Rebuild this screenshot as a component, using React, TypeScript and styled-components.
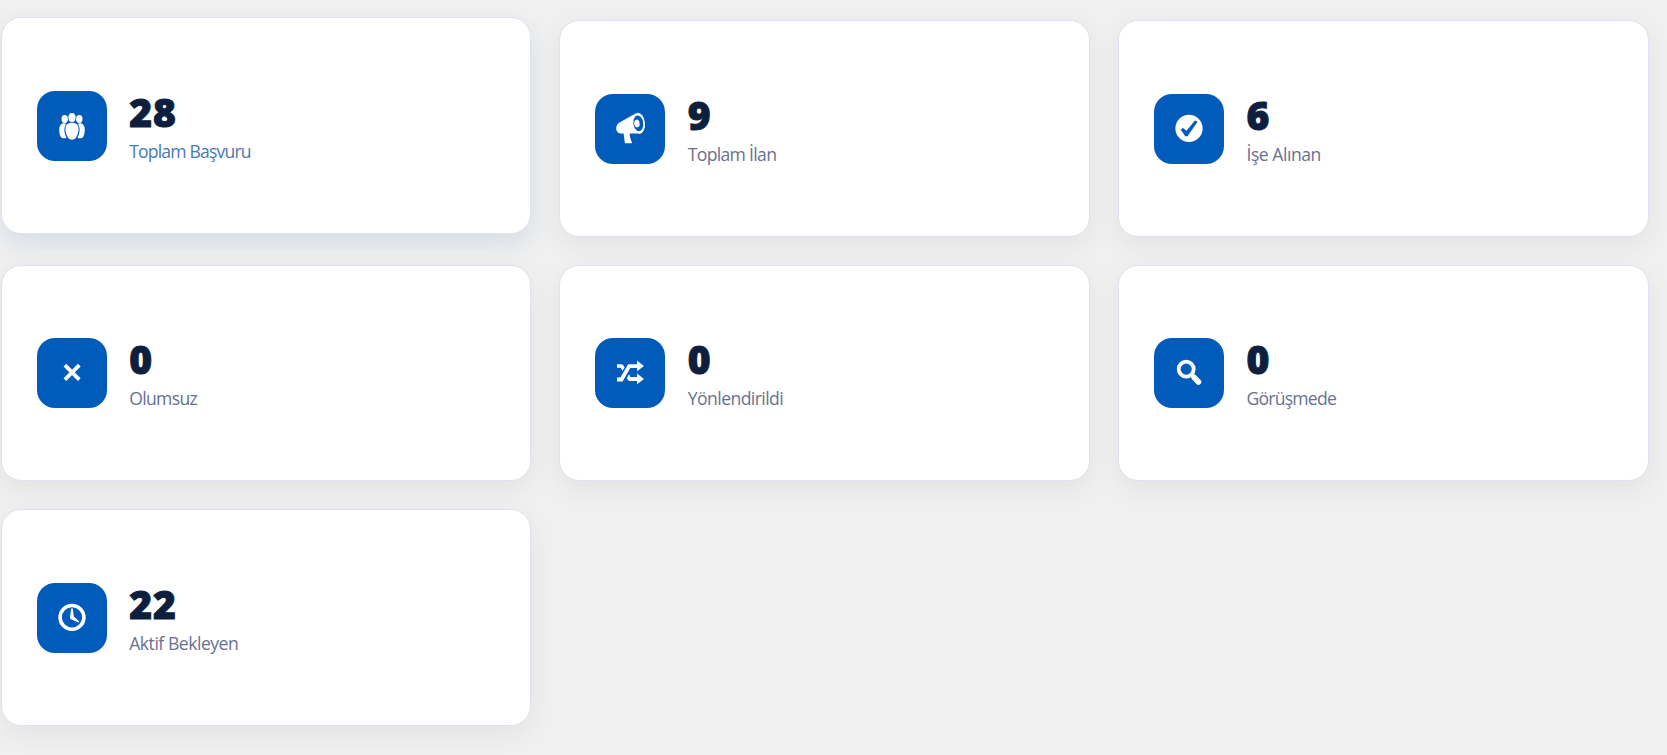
import React from 'react';
import styled, { createGlobalStyle } from 'styled-components';

const GlobalStyle = createGlobalStyle`
    * {
        box-sizing : border-box;
    }

    body {
        margin : 0;
        background-color : #f0f0f0;
        font-family : "Open Sans", "Noto Sans", sans-serif;
        overflow : hidden;
    }
`;

const Wrapper = styled.div`
    height : 755px;
    padding : 20.3px 18.3px 0 0.8px;
`;

const CardGrid = styled.div`
    display : grid;
    grid-template-columns : repeat(3, 1fr);
    grid-auto-rows : 216.5px;
    grid-gap : 28px;
`;

const Card = styled.div<{ $active?: boolean }>`
    display : flex;
    align-items : center;
    gap : 22.4px;
    padding : 0 35px;
    background-color : white;
    border : 1px solid #dde3ee;
    border-radius : 20px;
    box-shadow : ${({ $active }) => $active
        ? '0 12px 28px rgba(0, 91, 187, 0.08), 0 8px 24px rgba(0, 0, 0, 0.03)'
        : '0 8px 28px rgba(0, 0, 0, 0.06)'};
    transform : ${({ $active }) => $active ? 'translateY(-3px)' : 'none'};
`;

const IconBox = styled.div`
    flex-shrink : 0;
    width : 70px;
    height : 70px;
    border-radius : 18px;
    background-color : #005bbb;
    color : white;

    svg {
        display : block;
    }
`;

const Info = styled.div`
    display : flex;
    flex-direction : column;
    padding-top : 2px;
`;

const Count = styled.div`
    font-family : "Noto Sans", "Open Sans", sans-serif;
    font-size : 39px;
    font-weight : 900;
    line-height : 45px;
    letter-spacing : 0.9px;
    color : #0d1f3c;
    -webkit-text-stroke : 1px #0d1f3c;
`;

const Label = styled.div<{ $active?: boolean; $tracking: number }>`
    margin-top : 3px;
    font-size : 17.6px;
    line-height : 28px;
    white-space : nowrap;
    letter-spacing : ${({ $tracking }) => $tracking}px;
    color : ${({ $active }) => $active ? '#4b78b0' : '#69718f'};
`;

const Icon = ({ children }: { children: React.ReactNode }) => (
    <svg width="70" height="70" viewBox="0 0 70 70" fill="currentColor">
        {children}
    </svg>
);

const PeopleIcon = () => (
    <Icon>
        <ellipse cx="27.7" cy="28" rx="3.2" ry="3.9" />
        <ellipse cx="42.3" cy="28" rx="3.2" ry="3.9" />
        <path d="M26 32.300c-2.400.8-3.800 3-3.800 6.200 0 3.300.9 7.800 2.800 8.500 1.500.4 3.300.3 4.500-.3-1.500-3-2.300-6-2.100-9 .2-2 .8-3.600 1.900-4.900-1-.6-2.400-.8-3.300-.5z" />
        <path d="M44 32.300c2.400.8 3.800 3 3.800 6.200 0 3.300-.9 7.800-2.800 8.500-1.500.4-3.300.3-4.500-.3 1.500-3 2.300-6 2.100-9-.2-2-.8-3.600-1.900-4.900 1-.6 2.400-.8 3.300-.5z" />
        <ellipse cx="35" cy="26.600" rx="3.600" ry="4.500" />
        <path d="M35 31.800c-4.200 0-6.600 2.300-6.600 6 0 3 1 6 2.400 8.500.8 1.500 2.400 2.400 4.200 2.400s3.400-.9 4.200-2.400c1.400-2.500 2.400-5.500 2.400-8.500 0-3.700-2.400-6-6.600-6z" />
    </Icon>
);

const MegaphoneIcon = () => (
    <Icon>
        <path d="M41 19.200 24.500 28.400c-4.800 2.800-4.200 10.600.8 11.100H46z" />
        <path d="M28.500 38.500h6.300c-.6 3.500.9 6.500 2.300 10.800h-7.200z" />
        <ellipse cx="43.600" cy="29.200" rx="6.400" ry="10.400" transform="rotate(-7 43.600 29.200)" />
        <ellipse cx="43.300" cy="29.300" rx="4.900" ry="7.900" fill="#005bbb" transform="rotate(-7 43.300 29.300)" />
        <ellipse cx="41.900" cy="29.500" rx="2.700" ry="3.900" transform="rotate(-7 41.900 29.500)" />
    </Icon>
);

const CheckIcon = () => (
    <Icon>
        <circle cx="35" cy="34.400" r="13.600" />
        <path d="m26.600 35.600 2.400-1.700 3.500 2.900 8.400-10.200 2.700 1.200-10.100 14.500h-2.200z" fill="#005bbb" />
    </Icon>
);

const CrossIcon = () => (
    <Icon>
        <path d="m27.900 27.200 14.400 14.400M42.300 27.200 27.900 41.600" stroke="currentColor" strokeWidth="3.800" />
    </Icon>
);

const ShuffleIcon = () => (
    <Icon>
        <path d="M22 41.500h4.500l7.700-13.400H43" fill="none" stroke="currentColor" strokeWidth="3.800" />
        <path d="M22 26.200h4.800c1.400.5 2.200 1.800 2.800 3.300l-2 3.300-1.900-3H22zM34 36.300l1.500 2.800h6.500v4h-7.500c-1.500-.5-2-1.800-2.600-3.100z" />
        <path d="m42 22.600 7 5.400-7 5.200zM42 35.600l7 5.400-7 5.200z" />
    </Icon>
);

const SearchIcon = () => (
    <Icon>
        <circle cx="32.200" cy="31.100" r="7.500" fill="none" stroke="currentColor" strokeWidth="3.800" />
        <path d="m38 37 1.700 1.500" stroke="currentColor" strokeWidth="4" />
        <path d="m40.200 39.500 4.300 4.500" stroke="currentColor" strokeWidth="5.600" strokeLinecap="round" />
    </Icon>
);

const ClockIcon = () => (
    <Icon>
        <circle cx="35" cy="34.400" r="11.900" fill="none" stroke="currentColor" strokeWidth="3.600" />
        <path d="M34.200 25.500h1.600l1 7.900 5.500 5.200-.8 1-8.100-3.600-.4-1.700z" />
    </Icon>
);

const stats = [
    { count: 28, label: 'Toplam Başvuru', icon: <PeopleIcon />, tracking: -0.83, active: true },
    { count: 9, label: 'Toplam İlan', icon: <MegaphoneIcon />, tracking: -0.69 },
    { count: 6, label: 'İşe Alınan', icon: <CheckIcon />, tracking: -0.47 },
    { count: 0, label: 'Olumsuz', icon: <CrossIcon />, tracking: -0.67 },
    { count: 0, label: 'Yönlendirildi', icon: <ShuffleIcon />, tracking: -0.58 },
    { count: 0, label: 'Görüşmede', icon: <SearchIcon />, tracking: -0.77 },
    { count: 22, label: 'Aktif Bekleyen', icon: <ClockIcon />, tracking: -0.48 },
];

export default function App() {
    return (
        <Wrapper>
            <GlobalStyle />
            <CardGrid>
                {
                    stats.map((stat) => <Card key={stat.label} $active={stat.active}>
                        <IconBox>{stat.icon}</IconBox>
                        <Info>
                            <Count>{stat.count}</Count>
                            <Label $active={stat.active} $tracking={stat.tracking}>{stat.label}</Label>
                        </Info>
                    </Card>
                    )
                }
            </CardGrid>
        </Wrapper>
    );
}
